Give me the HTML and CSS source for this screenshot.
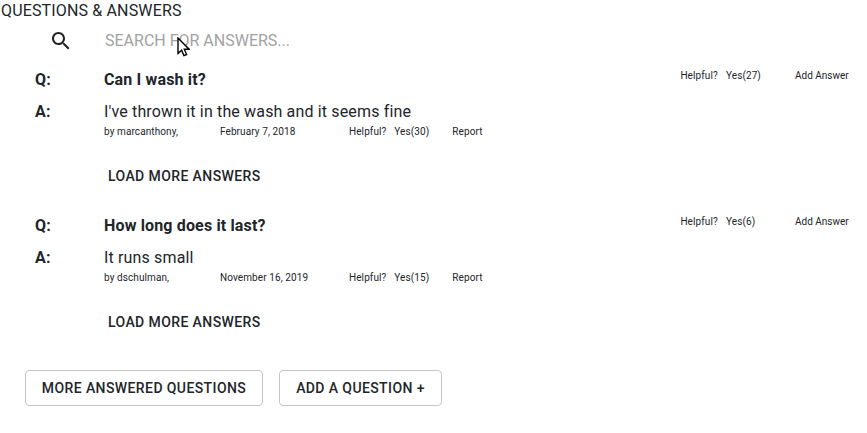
FILE: index.html
```html
<!DOCTYPE html>
<html lang="en">
<head>
<meta charset="utf-8">
<title>Questions &amp; Answers</title>
<link rel="stylesheet" href="styles.css">
</head>
<body>
<main>
  <h2 class="title">QUESTIONS &amp; ANSWERS</h2>
  <div class="search">
    <svg class="search-icon" viewBox="0 0 24 24"><path d="M15.5 14h-.79l-.28-.27C15.41 12.59 16 11.11 16 9.5 16 5.91 13.09 3 9.5 3S3 5.91 3 9.5 5.91 16 9.5 16c1.61 0 3.09-.59 4.23-1.57l.27.28v.79l5 4.99L20.49 19l-4.99-5zm-6 0C7.01 14 5 11.99 5 9.5S7.01 5 9.5 5 14 7.01 14 9.5 11.99 14 9.5 14z"/></svg>
    <span class="placeholder">SEARCH FOR ANSWERS...</span>
  </div>
  <section class="entry">
    <div class="row question">
      <b>Q:</b><b class="text">Can I wash it?</b>
      <div class="actions"><span>Helpful?</span><span>Yes(27)</span><span class="add-answer">Add Answer</span></div>
    </div>
    <div class="row answer"><b>A:</b><span class="text">I've thrown it in the wash and it seems fine</span></div>
    <div class="meta"><span>by marcanthony,</span><span>February 7, 2018</span><span>Helpful?</span><span>Yes(30)</span><span>Report</span></div>
    <div class="load">LOAD MORE ANSWERS</div>
  </section>
  <section class="entry">
    <div class="row question">
      <b>Q:</b><b class="text">How long does it last?</b>
      <div class="actions"><span>Helpful?</span><span>Yes(6)</span><span class="add-answer">Add Answer</span></div>
    </div>
    <div class="row answer"><b>A:</b><span class="text">It runs small</span></div>
    <div class="meta"><span>by dschulman,</span><span>November 16, 2019</span><span>Helpful?</span><span>Yes(15)</span><span>Report</span></div>
    <div class="load">LOAD MORE ANSWERS</div>
  </section>
  <div class="buttons">
    <button class="more">MORE ANSWERED QUESTIONS</button>
    <button class="add">ADD A QUESTION +</button>
  </div>
</main>
<svg class="cursor" viewBox="0 0 13 20"><path d="M1 1v15.5l3.6-3.3 2.3 5.4 2.7-1.1-2.3-5.3h4.8z"/></svg>
</body>
</html>
```
FILE: styles.css
```css
body {
  margin: 0;
  background: #fff;
  color: #212529;
  font: 16px/24px Roboto, sans-serif;
  overflow: hidden;
}
.title {
  margin: 0;
  padding-left: 1px;
  height: 22px;
  font-size: 16px;
  font-weight: 400;
  line-height: 21px;
  letter-spacing: .00938em;
}
.search {
  display: flex;
  align-items: center;
  height: 38px;
  padding-left: 49px;
}
.search-icon {
  width: 24px;
  height: 24px;
  margin-right: 32px;
  fill: #212121;
}
.placeholder { color: #a2a2a2; }
.entry { height: 146px; padding-left: 35px; box-sizing: border-box; }
.row {
  display: grid;
  grid-template-columns: 69px 576.4px 1fr;
  align-items: center;
  height: 24px;
  letter-spacing: .00938em;
}
.question { padding-top: 8px; }
.answer { padding-top: 8px; }
.actions {
  display: grid;
  grid-template-columns: 45.6px 69px 1fr;
  margin-top: -8px;
  font-size: 10px;
  letter-spacing: .00938em;
  white-space: nowrap;
}
.add-answer { letter-spacing: 0; }
.meta {
  display: grid;
  grid-template-columns: 116px 129px 45.3px 58px 1fr;
  padding: 2px 0 0 69px;
  height: 12px;
  line-height: 12px;
  font-size: 10px;
  letter-spacing: .00938em;
}
.load {
  margin-top: 26px;
  padding-left: 73px;
  font-size: 14px;
  font-weight: 500;
  letter-spacing: .4px;
}
.buttons { display: flex; gap: 16px; padding: 18px 0 0 25px; }
button {
  box-sizing: border-box;
  height: 36px;
  padding: 0;
  border: 1px solid #c4c4c4;
  border-radius: 4px;
  background: #fff;
  color: #212529;
  font: 500 14px/24px Roboto, sans-serif;
  letter-spacing: .4px;
}
.more { width: 238px; }
.add { width: 163px; }
.cursor {
  position: absolute;
  left: 176.5px;
  top: 37px;
  width: 13px;
  height: 20px;
  fill: #fff;
  stroke: #000;
  stroke-width: 1.4;
}
```
